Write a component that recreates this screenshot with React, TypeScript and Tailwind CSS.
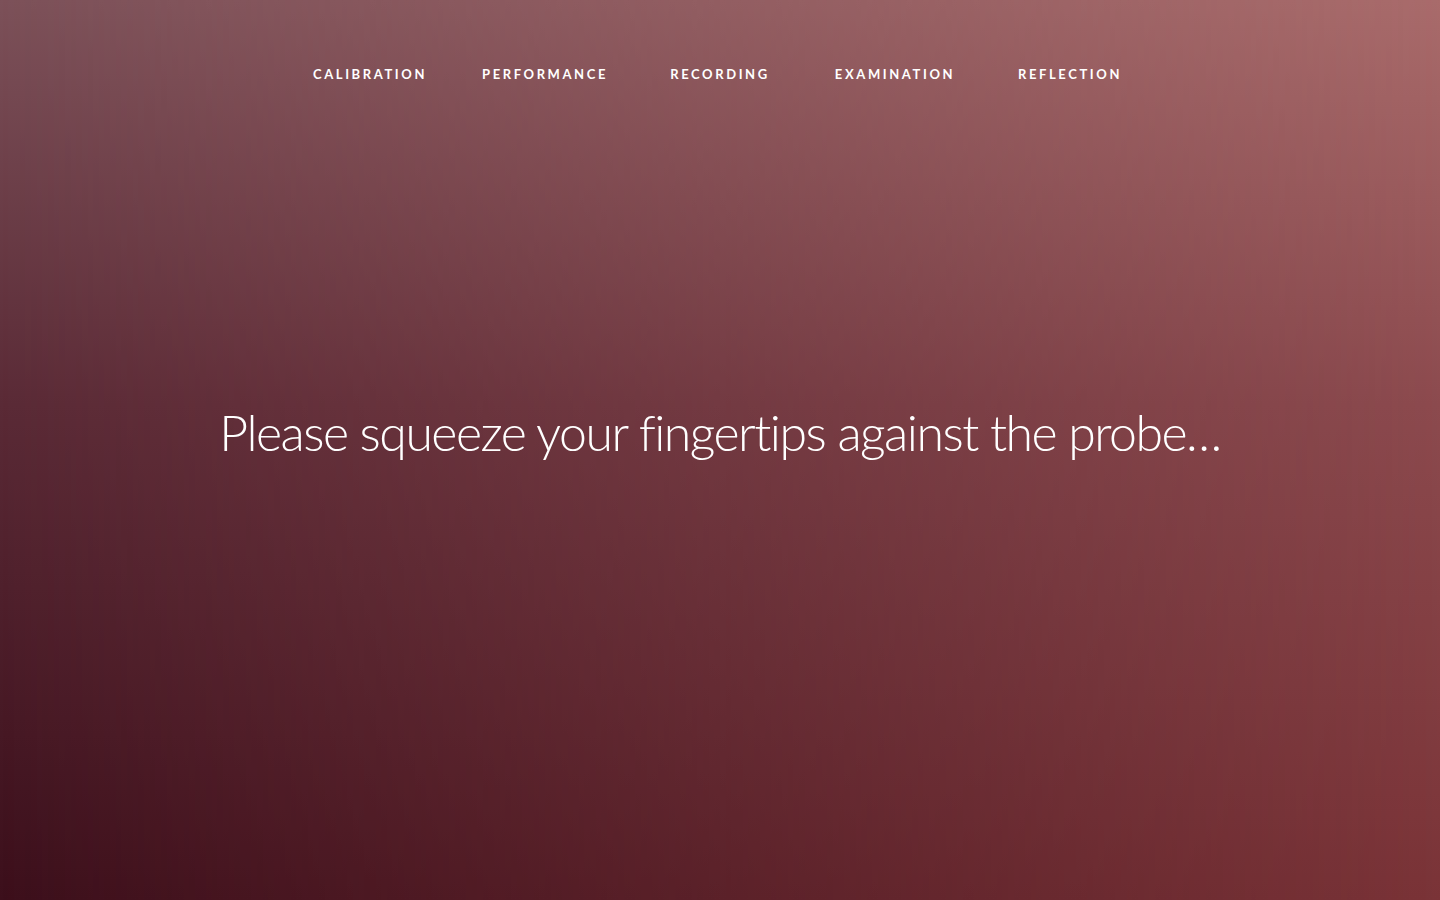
import React from "react";

const steps = ["CALIBRATION", "PERFORMANCE", "RECORDING", "EXAMINATION", "REFLECTION"];

export default function App() {
  return (
    <div className="relative h-[900px] w-full overflow-hidden bg-[linear-gradient(to_bottom,#7c5159,#5a2a36_45%,#3c0f1b)]">
      <div className="pointer-events-none absolute inset-0 bg-[linear-gradient(to_bottom,#a96b6b,#8c4a4e_45%,#7a3337)] [mask-image:linear-gradient(to_right,transparent,black)]" />
      <div className="relative flex h-full flex-col" style={{ fontFamily: "Lato, 'Noto Sans', sans-serif" }}>
        <nav className="mx-auto grid w-[875px] grid-cols-5 pt-[66px]">
          {steps.map((s) => (
            <div key={s} className="text-center text-[13px] font-bold leading-4 tracking-[0.2em] text-white">
              {s}
            </div>
          ))}
        </nav>
        <main className="flex flex-1 items-center justify-center pb-[118px]">
          <h1 className="text-[50px] font-light leading-none tracking-[-0.03em] text-white">
            Please squeeze your fingertips against the probe…
          </h1>
        </main>
      </div>
    </div>
  );
}
